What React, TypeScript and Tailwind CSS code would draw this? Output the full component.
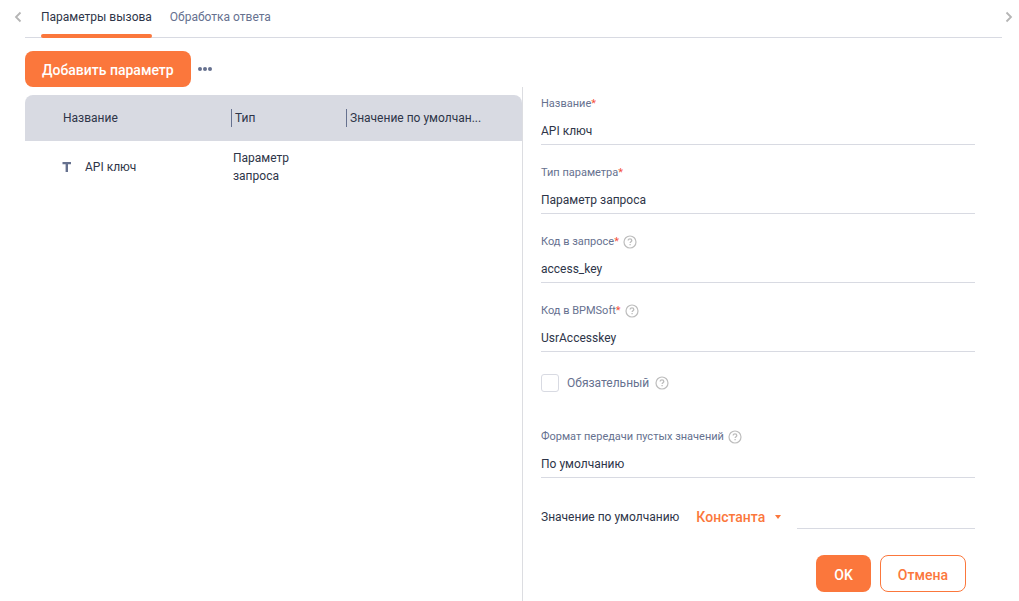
import React from 'react';
import clsx from 'clsx';

const tabs = [
  { id: 'request', caption: 'Параметры вызова' },
  { id: 'response', caption: 'Обработка ответа' },
];

const parameters = [
  { id: 1, name: 'API ключ', type: 'Параметр запроса', defaultValue: '' },
];

const HelpIcon: React.FC = () => (
  <svg width="14" height="14" viewBox="0 0 14 14" fill="none" stroke="#bdbdbd" aria-hidden="true">
    <circle cx="7" cy="7" r="6" strokeWidth="1.2" />
    <path d="M5.2 5.6c0-1.1.8-1.8 1.8-1.8s1.8.7 1.8 1.6c0 1.3-1.7 1.3-1.7 2.7" strokeWidth="1.3" />
    <path d="M7.1 9v1.3" strokeWidth="1.3" />
  </svg>
);

const Chevron: React.FC<{ direction: 'left' | 'right' }> = ({ direction }) => (
  <svg width="8" height="12" viewBox="0 0 8 12" fill="none" stroke="#b5b5b5" strokeWidth="1.8" aria-hidden="true">
    <path d={direction === 'left' ? 'M6.5 1.5 2 6l4.5 4.5' : 'M1.5 1.5 6 6l-4.5 4.5'} />
  </svg>
);

interface FieldProps {
  id: string;
  label: string;
  value: string;
  required?: boolean;
  help?: boolean;
  options?: string[];
}

const Field: React.FC<FieldProps> = ({ id, label, value, required, help, options }) => {
  const control =
    'block h-[33px] w-full appearance-none rounded-none border-b border-[#d8dae2] bg-transparent pt-1.5 text-xs text-[#2e3548] outline-none';

  return (
    <div>
      <div className="flex h-4 items-center gap-1">
        <label htmlFor={id} className="text-[11px] leading-4 text-[#66718f]">
          {label}
          {required && <span className="text-[#f5503c]">*</span>}
        </label>
        {help && <HelpIcon />}
      </div>
      {options ? (
        <select id={id} defaultValue={value} className={control}>
          {options.map((option) => (
            <option key={option}>{option}</option>
          ))}
        </select>
      ) : (
        <input id={id} type="text" defaultValue={value} className={control} />
      )}
    </div>
  );
};

const App: React.FC = () => {
  return (
    <div className="flex min-h-screen flex-col bg-white font-['Roboto','Liberation_Sans',sans-serif] text-xs text-[#2e3548]">
      {/* Tabs */}
      <header className="relative mr-[17px] ml-[25px] flex h-[38px] gap-[18px] border-b border-[#d8dae2] pl-4">
        <button type="button" aria-label="Назад" className="absolute top-[11px] left-[-11px]">
          <Chevron direction="left" />
        </button>
        {tabs.map((tab, index) => (
          <button key={tab.id} type="button" className="relative pb-1">
            <span className={clsx(index === 0 ? 'text-[#2e3548]' : 'text-[#66718f]')}>{tab.caption}</span>
            {index === 0 && (
              <span className="absolute inset-x-0 -bottom-px h-1 rounded-xs bg-[#fb773c]" />
            )}
          </button>
        ))}
        <button type="button" aria-label="Вперёд" className="absolute top-[11px] right-[-11px]">
          <Chevron direction="right" />
        </button>
      </header>

      {/* Toolbar */}
      <div className="mt-[13px] ml-[25px] flex h-9 items-center gap-[7px]">
        <button type="button" className="h-9 rounded-lg bg-[#fb773c] px-[17px] pt-0.5 text-sm font-medium text-white">
          Добавить параметр
        </button>
        <button type="button" aria-label="Ещё">
          <svg width="14" height="4" viewBox="0 0 14 4" fill="#66718f">
            <circle cx="2" cy="2" r="2" />
            <circle cx="7" cy="2" r="2" />
            <circle cx="12" cy="2" r="2" />
          </svg>
        </button>
      </div>

      <main className="grid flex-1 grid-cols-[522fr_497fr]">
        {/* Parameters list */}
        <section className="pt-2 pl-[25px]">
          <table className="w-full table-fixed border-separate border-spacing-0 text-left">
            <thead>
              <tr className="h-[46px]">
                <th className="w-[206px] rounded-tl-lg bg-[#d8dae2] pl-[38px] font-normal">Название</th>
                <th className="w-[115px] bg-[#d8dae2] font-normal">
                  <div className="border-l border-[#66718f] pl-[3px] leading-[18px]">Тип</div>
                </th>
                <th className="rounded-tr-lg bg-[#d8dae2] font-normal">
                  <div className="border-l border-[#66718f] pl-[3px] leading-[18px]">Значение по умолчан...</div>
                </th>
              </tr>
            </thead>
            <tbody>
              {parameters.map((parameter) => (
                <tr key={parameter.id} className="h-[52px] leading-[18px]">
                  <td className="pl-[37px]">
                    <div className="flex items-center gap-[13px]">
                      <svg width="10" height="10" viewBox="0 0 10 10" fill="#66718f" aria-hidden="true">
                        <path d="M.5 0h8.5v2.2H6V10H3.6V2.2H.5z" />
                      </svg>
                      {parameter.name}
                    </div>
                  </td>
                  <td className="pr-8 pl-0.5">{parameter.type}</td>
                  <td>{parameter.defaultValue}</td>
                </tr>
              ))}
            </tbody>
          </table>
        </section>

        {/* Parameter form */}
        <form className="border-l border-[#dcdde1] pt-[9px] pr-11 pb-2 pl-[18px]">
          <div className="flex flex-col gap-5">
            <Field id="name" label="Название" value="API ключ" required />
            <Field
              id="type"
              label="Тип параметра"
              value="Параметр запроса"
              options={['Параметр запроса', 'Заголовок', 'Тело запроса']}
              required
            />
            <Field id="code" label="Код в запросе" value="access_key" required help />
            <Field id="bpmCode" label="Код в BPMSoft" value="UsrAccesskey" required help />
          </div>

          <div className="mt-[22px] flex h-[18px] items-center">
            <input
              id="isRequired"
              type="checkbox"
              className="size-[18px] appearance-none rounded-[3px] border border-[#d8dae2] checked:bg-[#fb773c]"
            />
            <label htmlFor="isRequired" className="mr-1.5 ml-2 text-[#66718f]">
              Обязательный
            </label>
            <HelpIcon />
          </div>

          <div className="mt-[37px]">
            <Field
              id="emptyFormat"
              label="Формат передачи пустых значений"
              value="По умолчанию"
              options={['По умолчанию', 'Не передавать']}
              help
            />
          </div>

          <div className="mt-[23px] flex h-7 items-center">
            <label htmlFor="defaultValue" className="pt-1">
              Значение по умолчанию
            </label>
            <div className="relative mr-[14px] ml-[17px] flex items-center pt-1">
              <select
                aria-label="Источник значения"
                className="w-[87px] appearance-none text-sm font-medium text-[#fb773c] outline-none"
              >
                <option>Константа</option>
                <option>Системная настройка</option>
              </select>
              <svg width="6" height="4" viewBox="0 0 6 4" fill="#fb773c" className="pointer-events-none absolute right-0.5">
                <path d="M0 0h6L3 4z" />
              </svg>
            </div>
            <input
              id="defaultValue"
              type="text"
              className="h-7 min-w-0 flex-1 border-b border-[#d8dae2] outline-none"
            />
          </div>

          <div className="mt-[26px] mr-[9px] flex justify-end gap-[9px] text-sm font-medium">
            <button type="submit" className="h-[37px] rounded-lg bg-[#fb773c] px-[18px] pt-0.5 text-white">
              OK
            </button>
            <button
              type="button"
              className="h-[37px] rounded-lg border border-[#fb773c] bg-white px-[17px] pt-0.5 text-[#fb773c]"
            >
              Отмена
            </button>
          </div>
        </form>
      </main>
    </div>
  );
};

export default App;
